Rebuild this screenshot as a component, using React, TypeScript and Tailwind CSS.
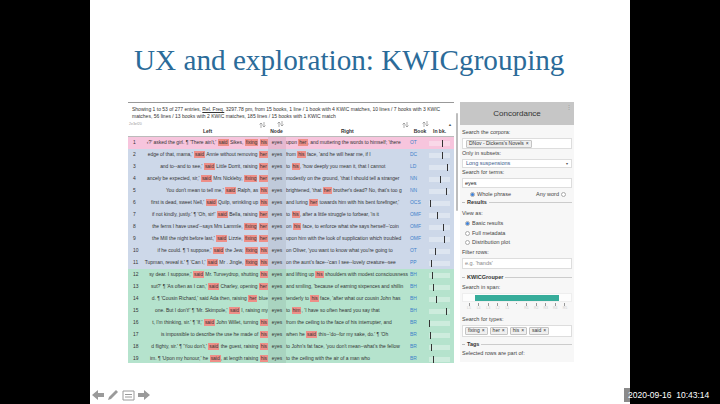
import React from 'react';

type Row = {
  left: string;
  node: string;
  right: string;
  book: string;
  mark: number;
  tone: 'pink' | 'blue' | 'green';
};

// [[word]] marks the red highlighted hits
const rows: Row[] = [
  { left: "‹?' asked the girl. ¶ 'There ain't,' [[said]] Sikes, [[fixing]] [[his]]", node: 'eyes', right: "upon [[her]], and muttering the words to himself; 'there", book: 'OT', mark: 13, tone: 'pink' },
  { left: "edge of that, mama,' [[said]] Annie without removing [[her]]", node: 'eyes', right: "from [[his]] face, 'and he will hear me, if I", book: 'DC', mark: 13, tone: 'blue' },
  { left: "and to--and to see,' [[said]] Little Dorrit, raising [[her]]", node: 'eyes', right: "to [[his]], 'how deeply you mean it, that I cannot", book: 'LD', mark: 18, tone: 'blue' },
  { left: "ancely be expected, sir,' [[said]] Mrs Nickleby, [[fixing]] [[her]]", node: 'eyes', right: "modestly on the ground, 'that I should tell a stranger", book: 'NN', mark: 11, tone: 'blue' },
  { left: "You don't mean to tell me,' [[said]] Ralph, as [[his]]", node: 'eyes', right: "brightened, 'that [[her]] brother's dead? No, that's too g", book: 'NN', mark: 17, tone: 'blue' },
  { left: "first is dead, sweet Nell,' [[said]] Quilp, wrinkling up [[his]]", node: 'eyes', right: "and luring [[her]] towards him with his bent forefinger,'", book: 'OCS', mark: 1, tone: 'blue' },
  { left: "if not kindly, justly.' ¶ 'Oh, sir!' [[said]] Bella, raising [[her]]", node: 'eyes', right: "to [[his]], after a little struggle to forbear, 'is it", book: 'OMF', mark: 8, tone: 'blue' },
  { left: "the ferns I have used'--says Mrs Lammle, [[fixing]] [[her]]", node: 'eyes', right: "on [[his]] face, to enforce what she says herself--'coin", book: 'OMF', mark: 14, tone: 'blue' },
  { left: "the Mill the night before last,' [[said]] Lizzie, [[fixing]] [[her]]", node: 'eyes', right: "upon him with the look of supplication which troubled", book: 'OMF', mark: 15, tone: 'blue' },
  { left: "if he could. ¶ 'I suppose,' [[said]] the Jew, [[fixing]] [[his]]", node: 'eyes', right: "on Oliver, 'you want to know what you're going to", book: 'OT', mark: 6, tone: 'blue' },
  { left: "Tupman, reveal it.' ¶ 'Can I,' [[said]] Mr . Jingle, [[fixing]] [[his]]", node: 'eyes', right: "on the aunt's face--'can I see--lovely creature--see", book: 'PP', mark: 2, tone: 'blue' },
  { left: "sy dear. I suppose,' [[said]] Mr. Turveydrop, shutting [[his]]", node: 'eyes', right: "and lifting up [[his]] shoulders with modest consciousness", book: 'BH', mark: 3, tone: 'green' },
  { left: "sut?' ¶ 'As often as I can,' [[said]] Charley, opening [[her]]", node: 'eyes', right: "and smiling, 'because of earning sixpences and shillin", book: 'BH', mark: 4, tone: 'green' },
  { left: "d. ¶ 'Cousin Richard,' said Ada then, raising [[her]] blue", node: 'eyes', right: "tenderly to [[his]] face, 'after what our cousin John has", book: 'BH', mark: 7, tone: 'green' },
  { left: "one. But I don't!' ¶ 'Mr. Skimpole,' [[said]] I, raising my", node: 'eyes', right: "to [[him]], 'I have so often heard you say that", book: 'BH', mark: 17, tone: 'green' },
  { left: "t, I'm thinking, sir.' ¶ 'If,' [[said]] John Willet, turning [[his]]", node: 'eyes', right: "from the ceiling to the face of his interrupter, and", book: 'BR', mark: 0, tone: 'green' },
  { left: "is impossible to describe the use he made of [[his]]", node: 'eyes', right: "when he [[said]] this--'do--for my sake, do.' ¶ 'Oh", book: 'BR', mark: 1, tone: 'green' },
  { left: "d flighty, sir.' ¶ 'You don't,' [[said]] the guest, raising [[his]]", node: 'eyes', right: "to John's fat face, 'you don't mean--what's the fellow", book: 'BR', mark: 2, tone: 'green' },
  { left: "im. ¶ 'Upon my honour,' he [[said]], at length raising [[his]]", node: 'eyes', right: "to the ceiling with the air of a man who", book: 'BR', mark: 4, tone: 'green' },
];

function Marked({ text }: { text: string }) {
  const parts = text.split(/\[\[|\]\]/);
  return (
    <>
      {parts.map((p, i) =>
        i % 2 === 1 ? (
          <span key={i} className="bg-[#ee8f88] px-[1px] py-[1px]">{p}</span>
        ) : (
          <span key={i}>{p}</span>
        )
      )}
    </>
  );
}

function SortIcon() {
  return (
    <svg width="7" height="6" viewBox="0 0 7 6" className="text-[#8a8a8a]">
      <path d="M2 6V1M0.5 2.5L2 1l1.5 1.5M5 0v5M3.5 3.5L5 5l1.5-1.5" stroke="currentColor" strokeWidth="0.7" fill="none" />
    </svg>
  );
}

function Tag({ label }: { label: string }) {
  return (
    <span className="flex items-center gap-[2px] h-[8px] px-[2px] bg-[#f0f0f0] border border-[#c4c4c4] rounded-[1px] text-[5px] text-[#333]">
      {label}
      <span className="text-[5px]">×</span>
    </span>
  );
}

function Radio({ on }: { on?: boolean }) {
  return (
    <span className="flex items-center justify-center w-[5px] h-[5px] rounded-full border border-[#aaa] bg-white shrink-0">
      {on && <span className="block w-[3px] h-[3px] rounded-full bg-[#3b7fd9]" />}
    </span>
  );
}

function Legend({ label }: { label: string }) {
  return (
    <div className="flex items-center gap-[2px] h-[9px] text-[5.5px] font-bold text-[#333]">
      <span className="w-[3px] h-px bg-[#bbb]" />
      <span>{label}</span>
      <span className="flex-1 h-px bg-[#ccc]" />
    </div>
  );
}

function Label({ text, className }: { text: string; className?: string }) {
  return <div className={`text-[5.5px] leading-[7px] text-[#444] ${className ?? ''}`}>{text}</div>;
}

const toneClass = {
  pink: 'bg-[#f7c5dd]',
  blue: 'bg-[#cdd8e9]',
  green: 'bg-[#b5e3cd]',
};

function Sidebar() {
  return (
    <div className="w-[114px] h-[260px] overflow-hidden bg-[#f7f7f7] shrink-0">
      <div className="relative h-[23px] bg-[#c6c6c6] flex items-center justify-center text-[8px] text-[#333]">
        Concordance
        <span className="absolute right-[2px] top-[2px] text-[6px] leading-[6px] text-[#999]">⋮</span>
      </div>
      <div className="px-[2px] pt-[4px]">
        <Label text="Search the corpora:" />
        <div className="flex items-center h-[11px] mt-[2px] pl-[3px] bg-white border border-[#ddd]">
          <Tag label="DNov - Dickens's Novels" />
        </div>
        <Label text="Only in subsets:" className="mt-[1px]" />
        <div className="flex items-center justify-between h-[9px] mt-[2px] px-[3px] bg-white border border-[#ddd] text-[5.5px] text-[#3a5a8c]">
          <span>Long suspensions</span>
          <span className="text-[4px] text-[#555]">▾</span>
        </div>
        <Label text="Search for terms:" className="mt-[1px]" />
        <div className="flex items-center h-[10px] mt-[2px] px-[2px] bg-white border border-[#ddd] text-[5.5px] text-[#222]">eyes</div>
        <div className="flex items-center justify-between h-[8px] mt-[2px] pl-[8px] pr-[6px] text-[5.5px] text-[#444]">
          <span className="flex items-center gap-[2px]"><Radio on />Whole phrase</span>
          <span className="flex items-center gap-[2px]">Any word<Radio /></span>
        </div>
        <Legend label="Results" />
        <Label text="View as:" className="mt-[3px]" />
        <div className="flex flex-col gap-[2.5px] mt-[3px] pl-[3px] text-[5.5px] leading-[7px] text-[#444]">
          <span className="flex items-center gap-[2px]"><Radio on />Basic results</span>
          <span className="flex items-center gap-[2px]"><Radio />Full metadata</span>
          <span className="flex items-center gap-[2px]"><Radio />Distribution plot</span>
        </div>
        <Label text="Filter rows:" className="mt-[3px]" />
        <div className="flex items-center h-[11px] mt-[2px] px-[2px] bg-white border border-[#ddd] text-[5.5px] text-[#888]">e.g. 'hands'</div>
        <div className="mt-[4px]"><Legend label="KWICGrouper" /></div>
        <Label text="Search in span:" className="mt-[2px]" />
        <div className="flex items-center h-[9px] mt-[2px] bg-[#fdfdfd] border border-[#eee]">
          <div className="ml-[12px] w-[84px] h-[6px] bg-[#37ad9b]" />
        </div>
        <div className="flex justify-between px-[4px] mt-[1px] h-[8px]">
          {[-5, -4, -3, -2, -1, 0, 1, 2, 3, 4, 5].map((n) => (
            <div key={n} className="flex flex-col items-center w-[6px]">
              <span className={`w-px ${n === 0 ? 'h-px' : 'h-[3px]'} bg-[#999]`} />
              <span className="text-[3.5px] leading-[4px] text-[#ccc]">{n === 0 ? '' : n > 0 ? `R${n}` : `L${-n}`}</span>
            </div>
          ))}
        </div>
        <Label text="Search for types:" className="mt-[5px]" />
        <div className="flex items-center gap-[2px] h-[12px] mt-[2px] px-[2px] bg-white border border-[#ddd]">
          <Tag label="fixing" />
          <Tag label="her" />
          <Tag label="his" />
          <Tag label="said" />
        </div>
        <div className="mt-[3px]"><Legend label="Tags" /></div>
        <Label text="Selected rows are part of:" className="mt-[1px]" />
      </div>
    </div>
  );
}

function ResultsTable() {
  return (
    <div className="w-[326px] shrink-0">
      <div className="h-[20px] pl-[4px] pt-[3px] border-t border-[#999] text-[5px] leading-[7px] text-[#333]">
        Showing 1 to 53 of 277 entries, <span className="underline">Rel. Freq.</span> 3297.78 pm, from 15 books, 1 line / 1 book with 4 KWIC matches, 10 lines / 7 books with 3 KWIC
        <br />
        matches, 56 lines / 13 books with 2 KWIC matches, 185 lines / 15 books with 1 KWIC match
      </div>
      <div className="relative flex items-end h-[15px] pb-[1px] text-[5px] font-bold text-[#333] border-b border-[#bbb] bg-white">
        <span className="absolute left-[1px] top-0 text-[3.5px] font-normal text-[#999]">2e3ef20</span>
        <div className="w-[140px] flex justify-between pl-[75px] pr-[2px]"><span>Left</span><span className="-mt-[6px]"><SortIcon /></span></div>
        <div className="w-[17px] text-center relative">Node<span className="absolute left-[9px] -top-[7px]"><SortIcon /></span></div>
        <div className="w-[125px] flex justify-between pl-[56px] pr-[1px]"><span>Right</span><span className="-mt-[6px]"><SortIcon /></span></div>
        <div className="w-[20px] text-center relative">Book<span className="absolute left-[12px] -top-[7px]"><SortIcon /></span></div>
        <div className="w-[24px] pl-[3px] relative">In bk.<span className="absolute right-[2px] -top-[6px] text-[4px] leading-[5px] text-[#555]">▲</span></div>
      </div>
      {rows.map((row, i) => (
        <div key={i} className={`flex items-center h-[12px] text-[4.95px] text-[#333] whitespace-nowrap ${toneClass[row.tone]}`}>
          <div className="w-[16px] pl-[5px] shrink-0">{i + 1}</div>
          <div className="w-[124px] shrink-0 flex justify-end overflow-hidden">
            <span className="shrink-0"><Marked text={row.left} /></span>
          </div>
          <div className="w-[18px] h-full shrink-0 flex items-center justify-center bg-[#00000010]">{row.node}</div>
          <div className="w-[124px] shrink-0 overflow-hidden"><Marked text={row.right} /></div>
          <div className="w-[19px] shrink-0 text-[#3d7fc9]">{row.book}</div>
          <div className="relative w-[21px] h-[5px] shrink-0 bg-[#ffffff55]">
            <span className="absolute top-[-1px] w-px h-[7px] bg-[#333]" style={{ left: row.mark }} />
          </div>
        </div>
      ))}
    </div>
  );
}

export default function App() {
  return (
    <div className="relative w-[720px] h-[404px] overflow-hidden bg-black font-['Liberation_Sans',sans-serif]">
      <div className="ml-[90px] w-[540px] h-[404px] bg-white">
        <div className="h-[102px] pl-[44px] pt-[41px] font-['Liberation_Serif',serif] text-[29.2px] leading-[38px] text-[#2b6b99] whitespace-nowrap">
          UX and exploration: KWICgrouping
        </div>
        <div className="flex pl-[38px] items-start">
          <div className="h-[261px] overflow-hidden">
            <ResultsTable />
          </div>
          <div className="w-[6px] h-[110px] shrink-0 flex justify-center pt-[11px]">
            <div className="w-[2px] h-[98px] rounded-full bg-[#bdbdbd]" />
          </div>
          <Sidebar />
        </div>
      </div>

      {/* slide controls, sit on top of the slide */}
      <div className="absolute left-[92px] top-[389px] flex items-center gap-[2px] text-[#9a9a9a]">
        <svg width="13" height="12" viewBox="0 0 13 12"><path d="M0 6l6-5v3h6v4H6v3z" fill="currentColor" /></svg>
        <svg width="13" height="12" viewBox="0 0 13 12"><path d="M1 11l1-3 7-7 2 2-7 7z" fill="currentColor" /></svg>
        <svg width="13" height="12" viewBox="0 0 13 12"><path d="M1 2h11v9H1z" fill="none" stroke="currentColor" /><path d="M3 5h7v1H3zM3 7.500h7v1H3z" fill="currentColor" /></svg>
        <svg width="13" height="12" viewBox="0 0 13 12"><path d="M13 6L7 1v3H1v4h6v3z" fill="currentColor" /></svg>
      </div>
      <div className="absolute left-[624px] top-[388px] w-[6px] h-[14px] bg-[#8a8a8a]" />
      <div className="absolute left-[628px] top-[388px] text-[8.5px] leading-[14px] text-white whitespace-nowrap">
        2020-09-16&nbsp; 10:43:14
      </div>
    </div>
  );
}
